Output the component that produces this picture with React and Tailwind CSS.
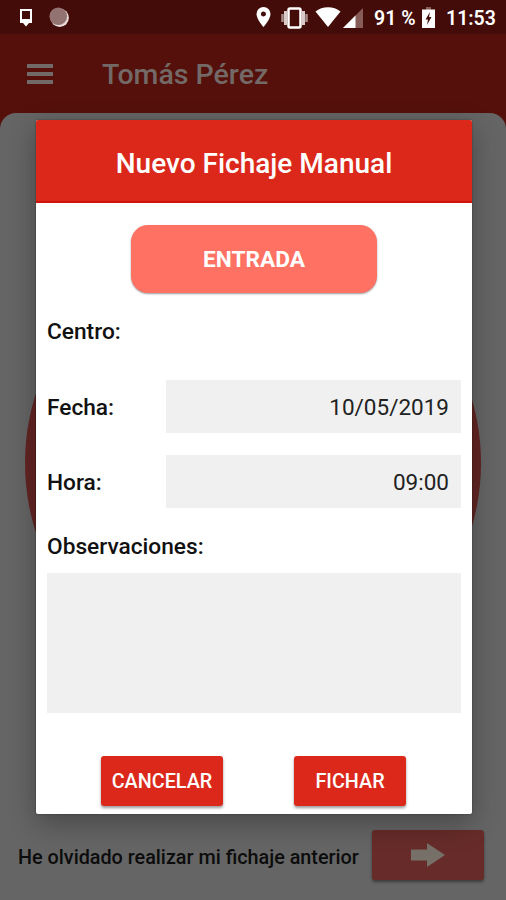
import { useState } from 'react'

function StatusBar() {
    return (
        <div className="h-[34px] bg-[#430c08] flex items-center text-white text-[20px] font-medium whitespace-nowrap">
            <svg className="w-[14px] h-[19px] ml-[19px]" viewBox="0 0 14 19">
                <path d="M2 2h10v10H2z" fill="none" stroke="#fff" strokeWidth="2" />
                <path d="M1 12h12v3h-3l-3 3.500-3-3.500H1z" fill="#fff" />
            </svg>
            <svg className="w-[20px] h-[20px] ml-[16px]" viewBox="0 0 20 20">
                <circle cx="10.700" cy="10.700" r="9.200" fill="#e9dcda" />
                <circle cx="9.300" cy="9.300" r="8.800" fill="#927371" />
            </svg>

            <svg className="w-[15px] h-[20px] ml-[187px]" viewBox="0 0 15 20">
                <path fillRule="evenodd" d="M7.500 0A7 7 0 0 0 .5 7c0 5.200 7 13 7 13s7-7.800 7-13a7 7 0 0 0-7-7zm0 9.500a2.500 2.500 0 1 1 0-5 2.500 2.500 0 0 1 0 5z" fill="#fff" />
            </svg>
            <svg className="w-[27px] h-[22px] ml-[10px] mt-px" viewBox="0 0 27 22">
                <rect x="7.500" y="1.500" width="12" height="19" rx="1.500" fill="none" stroke="#fff" strokeWidth="2.500" />
                <path d="M4.500 4v14M22.500 4v14" stroke="#d7cac9" strokeWidth="3" />
                <path d="M1.500 7v8M25.500 7v8" stroke="#a88c8a" strokeWidth="2.500" />
            </svg>
            <svg className="w-[26px] h-[20px] ml-[7px]" viewBox="0 0 26 20">
                <path d="M.5 4.500C7-1.200 19-1.200 25.500 4.500L13 20z" fill="#fff" />
            </svg>
            <svg className="w-[20px] h-[20px] ml-[2px] mt-px" viewBox="0 0 20 20">
                <path d="M0 20L20 0v20z" fill="#875c58" />
                <path d="M0 20L12.500 7.500V20z" fill="#fff" />
            </svg>
            <span className="w-[42px] ml-[11px] pt-[3px] text-[19.5px] font-semibold">91 %</span>
            <svg className="w-[13px] h-[21px] ml-[6px] mt-px" viewBox="0 0 13 21">
                <path d="M4 0h5v3H4z" fill="#875c58" />
                <path d="M0 2.500h13V21H0z" fill="#fff" />
                <path d="M8 5L3.500 12.500h2.500L5 18l4.500-8H7z" fill="#430c08" />
            </svg>
            <span className="ml-[11px] pt-[3px] text-[19.5px] font-semibold">11:53</span>
        </div>
    )
}

function AppBar({ name }) {
    return (
        <header className="h-[79px] bg-[#55100b] flex items-center pl-[27px] pt-px">
            <div className="w-[26px] flex flex-col gap-1 mb-px">
                <span className="h-[4px] bg-[#736966]" />
                <span className="h-[4px] bg-[#736966]" />
                <span className="h-[4px] bg-[#736966]" />
            </div>
            <h1 className="ml-[49px] mt-[3px] text-[28.5px] font-medium text-[#736966] whitespace-nowrap">{name}</h1>
        </header>
    )
}

function Field({ label, value }) {
    return (
        <div className="flex items-center h-[53px]">
            <span className="w-[119px] font-medium pt-[3px]">{label}</span>
            <div className="flex-1 h-full bg-[#f0f0f0] flex items-center justify-end pr-3 pt-px text-[22.5px] text-[#222]">
                {value}
            </div>
        </div>
    )
}

function ManualEntryDialog() {
    const [notes, setNotes] = useState('')

    return (
        <div className="w-[436px] h-[694px] bg-white rounded-[2px] overflow-hidden text-[22.7px] leading-[26px] text-[#111]">
            <div className="h-[83px] bg-[#dc281a] border-b-2 border-[#d0140b] flex items-center justify-center pt-[6px]">
                <h2 className="text-[28px] font-medium text-white whitespace-nowrap">Nuevo Fichaje Manual</h2>
            </div>
            <div className="px-[11px] flex flex-col">
                <button className="mt-[22px] ml-[84px] w-[246px] h-[68px] rounded-[17px] bg-[#ff7162] text-white font-bold pt-[2px] shadow-[0_1px_2px_rgba(0,0,0,0.4)]">
                    ENTRADA
                </button>
                <span className="mt-[26px] font-medium">Centro:</span>
                <div className="mt-[35px] flex flex-col gap-[22px]">
                    <Field label="Fecha:" value="10/05/2019" />
                    <Field label="Hora:" value="09:00" />
                </div>
                <span className="mt-[26px] font-medium">Observaciones:</span>
                <textarea
                    value={notes}
                    onChange={(e) => setNotes(e.target.value)}
                    className="mt-[13px] h-[140px] bg-[#f0f0f0] resize-none outline-none p-3"
                />
                <div className="mt-[43px] ml-[54px] flex gap-[71px] text-[19.8px] font-medium text-white">
                    <button className="w-[122px] h-[50px] rounded-[3px] bg-[#dc281a] pt-px shadow-[0_2px_3px_rgba(0,0,0,0.4)]">
                        CANCELAR
                    </button>
                    <button className="w-[112px] h-[50px] rounded-[3px] bg-[#dc281a] pt-px shadow-[0_2px_3px_rgba(0,0,0,0.4)]">
                        FICHAR
                    </button>
                </div>
            </div>
        </div>
    )
}

export default function App() {
    return (
        <div className="relative w-[506px] h-[900px] overflow-hidden bg-[#55100b] font-['Roboto',sans-serif]">
            <StatusBar />
            <AppBar name="Tomás Pérez" />
            <main className="h-[787px] rounded-t-[16px] bg-[#656565] flex flex-col items-center">
                <div className="mt-[122px] w-[456px] h-[456px] shrink-0 rounded-full bg-[#622522]" />
                <div className="mt-[139px] w-full pl-[18px] flex items-center text-[19.8px] font-medium text-[#0c0c0c]">
                    <span className="w-[354px] pt-[5px] whitespace-nowrap">He olvidado realizar mi fichaje anterior</span>
                    <div className="w-[112px] h-[50px] rounded-[3px] bg-[#672c29] flex items-center justify-center shadow-[0_2px_3px_rgba(0,0,0,0.4)]">
                        <svg className="w-[34px] h-[24px]" viewBox="0 0 34 24">
                            <path d="M0 6.500h16V0l18 12-18 12v-6.500H0z" fill="#777068" />
                        </svg>
                    </div>
                </div>
            </main>

            <div className="absolute left-[36px] top-[120px] rounded-[2px] shadow-[0_9px_28px_rgba(0,0,0,0.3),0_0_2px_rgba(0,0,0,0.4)]">
                <ManualEntryDialog />
            </div>
        </div>
    )
}
